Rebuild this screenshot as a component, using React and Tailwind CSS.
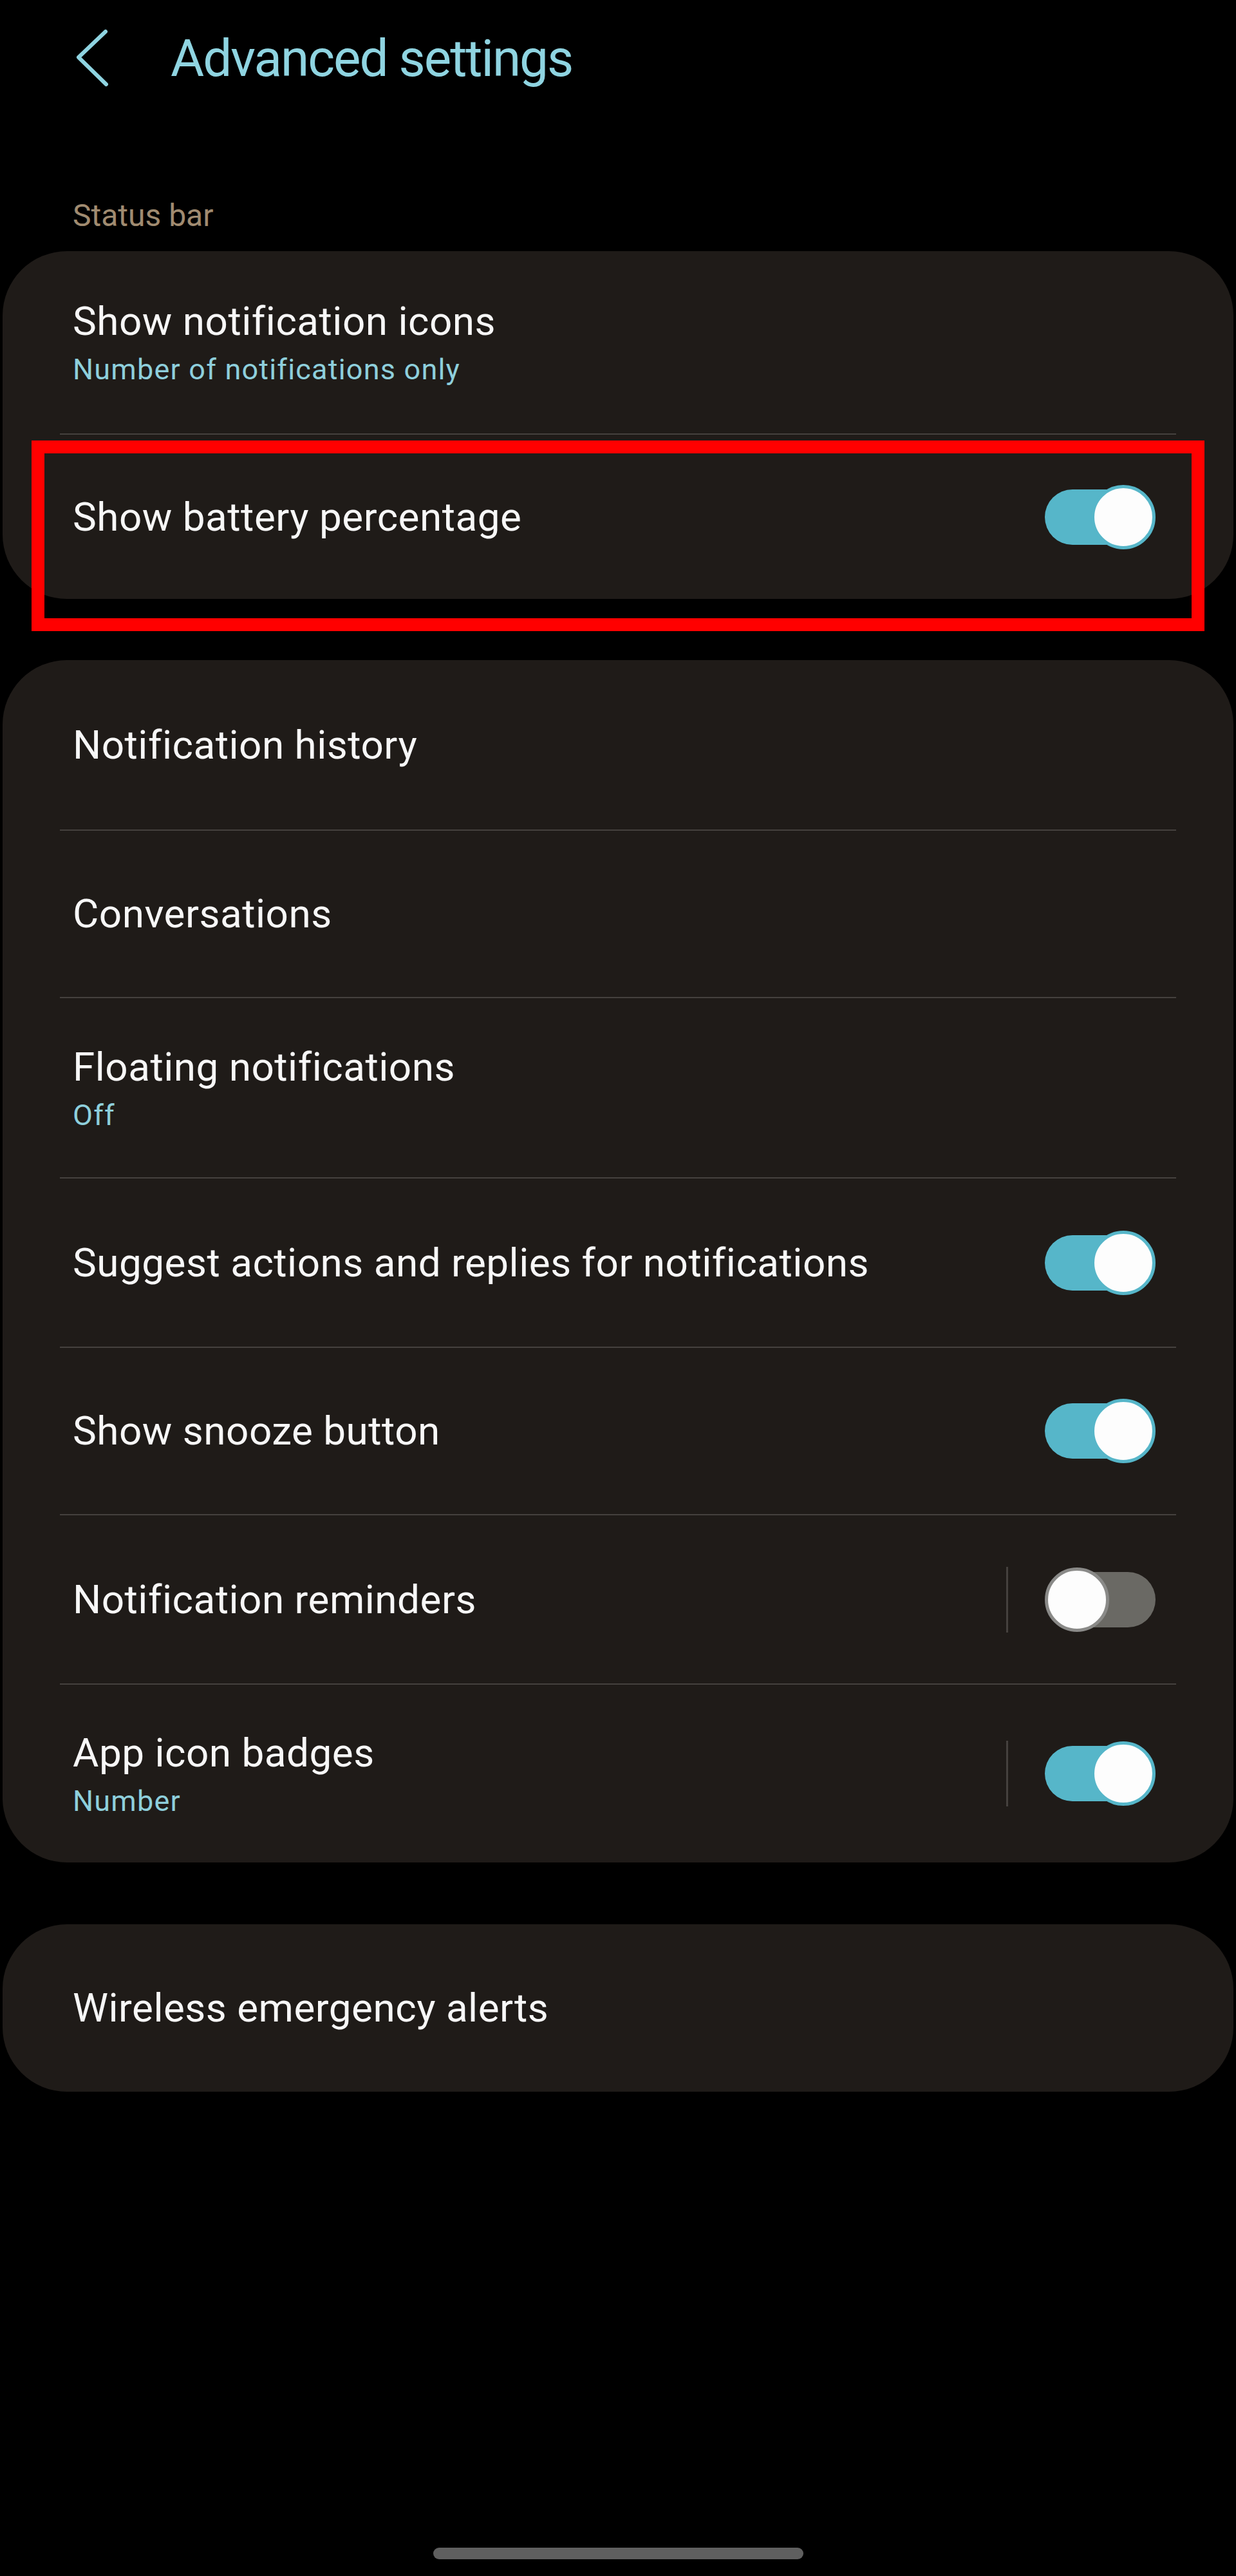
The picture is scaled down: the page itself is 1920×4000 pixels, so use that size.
import React from "react";

const Toggle = ({ on }) => {
  if (on) {
    return (
      <div className="relative w-[172px] h-[104px] shrink-0">
        <div className="absolute left-0 top-[9px] w-[140px] h-[86px] rounded-full bg-[#56b6c9]" />
        <div className="absolute right-0 top-[2px] w-[100px] h-[100px] rounded-full bg-[#fdfdfd] border-[5px] border-[#56b6c9]" />
      </div>
    );
  }
  return (
    <div className="relative w-[172px] h-[104px] shrink-0">
      <div className="absolute right-0 top-[9px] w-[140px] h-[86px] rounded-full bg-[#6a6964]" />
      <div className="absolute left-0 top-[2px] w-[100px] h-[100px] rounded-full bg-[#fdfdfd] border-[5px] border-[#8a8a88]" />
    </div>
  );
};

const Row = ({ item, first }) => (
  <div
    className={`mx-[89px] flex items-center ${item.h} ${
      first ? "" : "border-t-2 border-[#45413e]"
    }`}
  >
    <div className="flex-1 flex items-center justify-between pl-[20px] pr-[32px]">
      <div className="flex flex-col">
        <span className="text-[62px] leading-[72px] tracking-[0.5px] text-[#f7f7f7]">
          {item.title}
        </span>
        {item.sub ? (
          <span className="text-[45px] leading-[52px] tracking-[1.2px] mt-[13px] text-[#8ecfdc]">
            {item.sub}
          </span>
        ) : null}
      </div>
      {item.toggle ? (
        <div className="flex items-center">
          {item.sep ? (
            <div className="w-[3px] h-[102px] bg-[#45413e] mr-[57px]" />
          ) : null}
          <Toggle on={item.toggle === "on"} />
        </div>
      ) : null}
    </div>
  </div>
);

const statusRows = [
  { title: "Show notification icons", sub: "Number of notifications only", h: "h-[283px]" },
  { title: "Show battery percentage", toggle: "on", h: "h-[257px]" },
];

const notifRows = [
  { title: "Notification history", h: "h-[263px]" },
  { title: "Conversations", h: "h-[260px]" },
  { title: "Floating notifications", sub: "Off", h: "h-[280px]" },
  { title: "Suggest actions and replies for notifications", toggle: "on", h: "h-[263px]" },
  { title: "Show snooze button", toggle: "on", h: "h-[260px]" },
  { title: "Notification reminders", toggle: "off", sep: true, h: "h-[263px]" },
  { title: "App icon badges", sub: "Number", toggle: "on", sep: true, h: "h-[278px]" },
];

export default function App() {
  return (
    <div className="relative w-[1920px] h-[4000px] bg-black flex flex-col font-['Roboto',sans-serif]">
      {/* header */}
      <div className="h-[182px] flex items-center pl-[110px]">
        <svg width="64" height="104" viewBox="0 0 64 104" className="shrink-0">
          <polyline
            points="54,10 12,50 55,92"
            fill="none"
            stroke="#8fd4e1"
            strokeWidth="6"
            strokeLinecap="round"
            strokeLinejoin="round"
          />
        </svg>
        <h1 className="ml-[91px] text-[80px] leading-[96px] tracking-[-2px] text-[#8fd4e1]">
          Advanced settings
        </h1>
      </div>

      <div className="mt-[123px] mb-[25px] pl-[113px] h-[60px] flex items-center text-[48px] text-[#a08b70]">
        Status bar
      </div>

      <div className="mx-[4px] rounded-[100px] bg-[#1f1b18] flex flex-col">
        {statusRows.map((item, i) => (
          <Row key={item.title} item={item} first={i === 0} />
        ))}
      </div>

      <div className="mt-[95px] mx-[4px] rounded-[100px] bg-[#1f1b18] flex flex-col">
        {notifRows.map((item, i) => (
          <Row key={item.title} item={item} first={i === 0} />
        ))}
      </div>

      <div className="mt-[96px] mx-[4px] h-[260px] rounded-[100px] bg-[#1f1b18] flex items-center pl-[109px]">
        <span className="text-[62px] leading-[72px] tracking-[0.5px] text-[#f7f7f7]">
          Wireless emergency alerts
        </span>
      </div>

      <div className="mt-auto mb-[26px] self-center w-[575px] h-[18px] rounded-full bg-[#5f5f5f]" />

      {/* highlight annotation */}
      <div className="absolute left-[49px] top-[684px] w-[1822px] h-[296px] border-[20px] border-[#ff0000]" />
    </div>
  );
}
